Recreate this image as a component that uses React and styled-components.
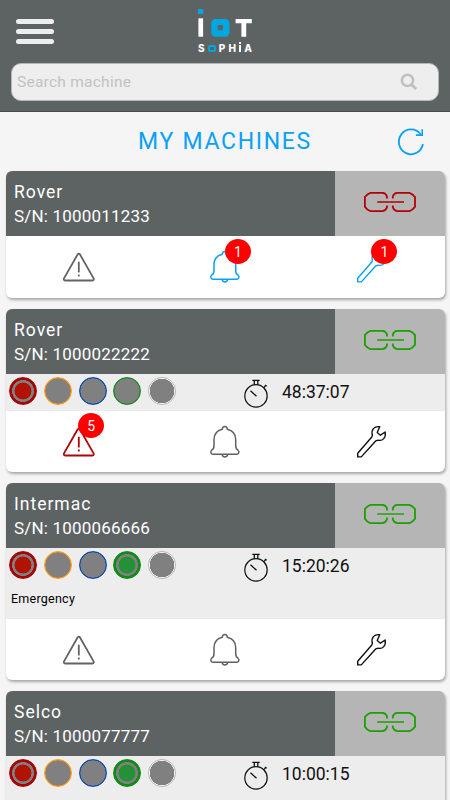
import styled, { createGlobalStyle } from "styled-components";

const machines = [
  { name: "Rover", serial: "1000011233", linked: false, bells: 1, tools: 1, actions: 62 },
  { name: "Rover", serial: "1000022222", linked: true, time: "48:37:07", lamps: ["red"], warnings: 5, actions: 61 },
  { name: "Intermac", serial: "1000066666", linked: true, time: "15:20:26", lamps: ["red", "green"], message: "Emergency", actions: 61 },
  { name: "Selco", serial: "1000077777", linked: true, time: "10:00:15", lamps: ["red", "green"], message: " ", actions: 61 },
];

const lampColors = {
  red: { ring: "#a60507", fill: "#b01204" },
  orange: { ring: "#ff9c12", fill: "#ff9c12" },
  blue: { ring: "#0a48ad", fill: "#0a48ad" },
  green: { ring: "#128a17", fill: "#259136" },
  white: { ring: "#b4b4b4", fill: "#ffffff" },
};

const Logo = () => (
  <LogoBox>
    <svg width="56" height="33" viewBox="0 0 56 33">
      <rect x="1" y="1" width="5.3" height="5" fill="#00a7e1" />
      <rect x="1.4" y="10.3" width="4.7" height="18.4" fill="#fff" />
      <path fill="#00a7e1" fillRule="evenodd" d="M18.5 11h9.8a4.2 4.2 0 0 1 4.2 4.2v9.3a4.2 4.2 0 0 1-4.2 4.2h-9.8a4.2 4.2 0 0 1-4.2-4.2v-9.3A4.2 4.2 0 0 1 18.5 11zM20.7 17.1v5.1h5.2v-5.1z" />
      <path fill="#fff" d="M38.6 11h16.2v4.3h-5.6v13.4h-4.8V15.3h-5.8z" />
    </svg>
    <Sophia>
      <span>S</span>
      <i />
      <span>P</span>
      <span>H</span>
      <Iota />
      <span>A</span>
    </Sophia>
  </LogoBox>
);

const SearchIcon = () => (
  <svg width="18" height="18" viewBox="0 0 18 18" fill="none" stroke="#bfbfbf">
    <circle cx="7.5" cy="7.4" r="5.6" strokeWidth="2.5" />
    <path d="M11.5 11.5l4.6 4.5" strokeWidth="2.8" />
  </svg>
);

const RefreshIcon = () => (
  <svg width="28" height="28" viewBox="0 0 28 28" fill="none" stroke="#08a1f6" strokeWidth="1.8">
    <path d="M24.9 16A12.1 12.4 0 1 1 22.6 6.3" />
    <path d="M24.2 1.2v5.9h-6.3" strokeWidth="1.6" />
  </svg>
);

const LinkIcon = ({ color }) => (
  <svg width="54" height="22" viewBox="0 0 54 22" fill="none" stroke={color} strokeWidth="1.8">
    <path d="M24 7.4V5.5Q22.8 2 19.6 1.8H7.4Q4.2 2.7 1.9 6.1V15.7Q4 19 7.4 20.1H19.6Q22.8 19.8 24 16.3V14.4" strokeLinejoin="round" />
    <path d="M29.8 7.4V5.5Q31 2 34.2 1.8H46.4Q49.8 2.7 52 6.1V15.7Q49.8 19 46.4 20.1H34.2Q31 19.8 29.8 16.3V14.4" strokeLinejoin="round" />
    <path d="M14.2 11h26.8" strokeWidth="1.4" />
  </svg>
);

const WarningIcon = ({ color }) => (
  <svg width="34" height="32" viewBox="0.4 0 34 32" fill="none" stroke={color} strokeWidth="1.8">
    <path d="M16.1 3.3q1.1-1.3 2.2 0L32 27.4q.7 2-1.2 2.1H3.6q-2-.1-1.2-2.1z" strokeLinejoin="round" />
    <path d="M17.2 10.7v10.7" />
    <path d="M17.2 23.6v1.8" />
  </svg>
);

const BellIcon = ({ color }) => (
  <svg width="32" height="34" viewBox="0 0 32 34" fill="none" stroke={color} strokeWidth="1.5">
    <path d="M13.3 4.3C13.3.5 18.3.5 18.3 4.3C23.5 5.6 26.7 9.5 26.7 14.4V20.5C26.7 23.5 27.3 24.2 29 25.2C30.5 26.5 30 29.2 28 29.3H3.7C1.7 29.2 1.2 26.5 2.7 25.2C4.4 24.2 5 23.5 5 20.5V14.4C5 9.500 8.2 5.6 13.3 4.3z" strokeLinejoin="round" />
    <path d="M13.2 29.5c.3 3.3 5 3.3 5.3 0" />
  </svg>
);

const WrenchIcon = ({ color }) => (
  <svg width="32" height="34" viewBox="0.4 0 32 34" fill="none" stroke={color} strokeWidth="1.4">
    <path
      d="M24.1 1.7C18.7.9 15.2 4.9 16.8 10.2L16.2 12L2.1 28.2v3.7h3.6L20.3 15.8l2.1-.7c4.8 1.3 8.2-2.6 7.1-8.1l-4.7 3.2l-3.2-2.7z"
      strokeLinejoin="round"
    />
  </svg>
);

const StopwatchIcon = () => (
  <svg width="26" height="30" viewBox="0 0 26 30" fill="none" stroke="#111">
    <circle cx="13" cy="17.9" r="11.2" strokeWidth="1.2" />
    <path d="M9.3 2.3h7.4M11.3 2.8v4M14.8 2.8v4M7.5 12.7l6 5.6M20.9 9.7l1.7-2M21.9 7l1.8 1.3" strokeWidth="1.3" />
  </svg>
);

const Action = ({ icon: Icon, color, count, left = 15.5, top = -11 }) => (
  <ActionCell>
    <IconHolder>
      <Icon color={color} />
      {count && <Badge $left={left} $top={top}>{count}</Badge>}
    </IconHolder>
  </ActionCell>
);

const Machine = ({ machine }) => (
  <Card>
    <CardHead>
      <Info>
        <Name>{machine.name}</Name>
        <Serial>S/N: {machine.serial}</Serial>
      </Info>
      <LinkCell>
        <LinkIcon color={machine.linked ? "#1ba000" : "#b30005"} />
      </LinkCell>
    </CardHead>
    {machine.time && (
      <Status $tall={machine.message}>
        <StatusRow>
          <Lamps>
            {Object.keys(lampColors).map((key) => (
              <Lamp key={key} $ring={lampColors[key].ring} $fill={lampColors[key].fill} $on={machine.lamps.includes(key)} $pale={key === "white"} />
            ))}
          </Lamps>
          <Timer>
            <StopwatchIcon />
            <span>{machine.time}</span>
          </Timer>
        </StatusRow>
        {machine.message && <Message>{machine.message}</Message>}
      </Status>
    )}
    <Actions $height={machine.actions}>
      <Action icon={WarningIcon} color={machine.warnings ? "#ad0507" : "#626268"} count={machine.warnings} left={16} top={-12.5} />
      <Action icon={BellIcon} color={machine.bells ? "#08a1f6" : "#5f6066"} count={machine.bells} />
      <Action icon={WrenchIcon} color={machine.tools ? "#08a1f6" : "#111"} count={machine.tools} />
    </Actions>
  </Card>
);

const App = () => (
  <Page>
    <GlobalStyle />
    <Header>
      <TopBar>
        <Burger>
          <span />
          <span />
          <span />
        </Burger>
        <Logo />
      </TopBar>
      <Search>
        <input placeholder="Search machine" />
        <SearchIcon />
      </Search>
    </Header>
    <TitleRow>
      <Title>MY MACHINES</Title>
      <RefreshIcon />
    </TitleRow>
    <List>
      {machines.map((machine) => (
        <Machine key={machine.serial} machine={machine} />
      ))}
    </List>
  </Page>
);

const GlobalStyle = createGlobalStyle`
  * { box-sizing: border-box; }
  body {
    margin: 0;
    background: #f5f5f5;
    font-family: Roboto, sans-serif;
  }
  svg { display: block; flex: none; }
`;
const Page = styled.div`
  height: 800px;
  overflow: hidden;
  background: #f5f5f5;
`;
const Header = styled.header`
  height: 112px;
  background: #5d6363;
  border-bottom: 1px solid #464c4c;
`;
const TopBar = styled.div`
  height: 63px;
  display: grid;
  grid-template-columns: 1fr auto 1fr;
  padding: 8px 16px 0;
`;
const Burger = styled.div`
  width: 38px;
  padding-top: 11px;
  display: flex;
  flex-direction: column;
  gap: 5px;
  span {
    height: 5px;
    border-radius: 3px;
    background: #eee;
  }
`;
const LogoBox = styled.div`
  width: 56px;
  height: 48px;
`;
const Sophia = styled.div`
  display: flex;
  align-items: center;
  justify-content: space-between;
  height: 9px;
  margin-top: 3px;
  padding: 0 1px;
  color: #fff;
  font: 800 10px/9px Inter, sans-serif;
  i {
    width: 8px;
    height: 7px;
    border: 2.6px solid #00a7e1;
    border-radius: 2px;
  }
`;
const Iota = styled.b`
  width: 2px;
  height: 10px;
  margin-top: -3px;
  background: linear-gradient(#fff 2px, transparent 2px, transparent 3px, #fff 3px);
`;
const Search = styled.label`
  display: flex;
  align-items: center;
  height: 38px;
  margin: 0 11px;
  padding: 0 20px 0 5px;
  border: 1px solid #b5b8b8;
  border-radius: 10px;
  background: #eee;
  input {
    flex: 1;
    min-width: 0;
    padding: 0;
    border: 0;
    outline: 0;
    background: none;
    font: 400 15.5px Roboto, sans-serif;
    letter-spacing: 0.25px;
  }
  input::placeholder { color: #c2c2c2; }
`;
const TitleRow = styled.div`
  height: 59px;
  display: grid;
  grid-template-columns: 1fr auto 1fr;
  align-items: center;
  svg { justify-self: end; margin-right: 24px; }
  &::before { content: ""; }
`;
const Title = styled.h1`
  margin: 1px 0 0;
  color: #08a1f6;
  font-size: 23px;
  font-weight: 400;
  line-height: 28px;
  letter-spacing: 1.7px;
`;
const List = styled.main`
  display: flex;
  flex-direction: column;
  gap: 11px;
  padding: 0 5px 0 6px;
`;
const Card = styled.section`
  flex: none;
  overflow: hidden;
  border-radius: 6px;
  background: #fff;
  box-shadow: 1px 2px 3px rgba(0, 0, 0, 0.32);
`;
const CardHead = styled.div`
  display: flex;
  height: 65px;
`;
const Info = styled.div`
  width: 329px;
  padding: 9px 8px 0;
  background: #5d6363;
  color: #fff;
`;
const Name = styled.div`
  font-size: 17.5px;
  font-weight: 400;
  line-height: 24px;
  letter-spacing: 1px;
`;
const Serial = styled.div`
  font-size: 17px;
  line-height: 24px;
  letter-spacing: 0.2px;
`;
const LinkCell = styled.div`
  flex: 1;
  display: flex;
  align-items: center;
  justify-content: center;
  padding-bottom: 3px;
  background: #b5b5b5;
`;
const Status = styled.div`
  height: ${(p) => (p.$tall ? 71 : 37)}px;
  background: #ededed;
`;
const StatusRow = styled.div`
  display: flex;
  height: 37px;
  padding: 3px 0 0 3px;
`;
const Lamps = styled.div`
  display: flex;
  gap: 6.8px;
  width: 234px;
`;
const Lamp = styled.span`
  width: 28px;
  height: 28px;
  border: 1px solid ${(p) => p.$ring};
  border-radius: 50%;
  background: ${(p) =>
    p.$on
      ? `radial-gradient(circle, ${p.$fill} 8.2px, #808080 8.7px, #808080 10.7px, ${p.$ring} 11.2px)`
      : p.$pale
        ? "radial-gradient(circle, #808080 12px, #fff 12.5px)"
        : `radial-gradient(circle, #808080 12.4px, ${p.$ring} 12.9px)`};
`;
const Timer = styled.div`
  display: flex;
  gap: 13px;
  color: #111;
  font-size: 17.5px;
  line-height: 30px;
  svg { margin-top: 1px; }
`;
const Message = styled.div`
  padding: 6px 5px;
  color: #000;
  font-size: 12.5px;
  line-height: 16px;
  letter-spacing: 0.25px;
`;
const Actions = styled.div`
  display: grid;
  grid-template-columns: repeat(3, 1fr);
  height: ${(p) => p.$height}px;
`;
const ActionCell = styled.div`
  display: flex;
  align-items: center;
  justify-content: center;
`;
const IconHolder = styled.div`
  position: relative;
`;
const Badge = styled.span`
  position: absolute;
  top: ${(p) => p.$top}px;
  left: ${(p) => p.$left}px;
  width: 26px;
  height: 25px;
  border-radius: 50%;
  background: #fe0000;
  color: #fff;
  font-size: 14px;
  line-height: 26px;
  text-align: center;
`;

export default App;
